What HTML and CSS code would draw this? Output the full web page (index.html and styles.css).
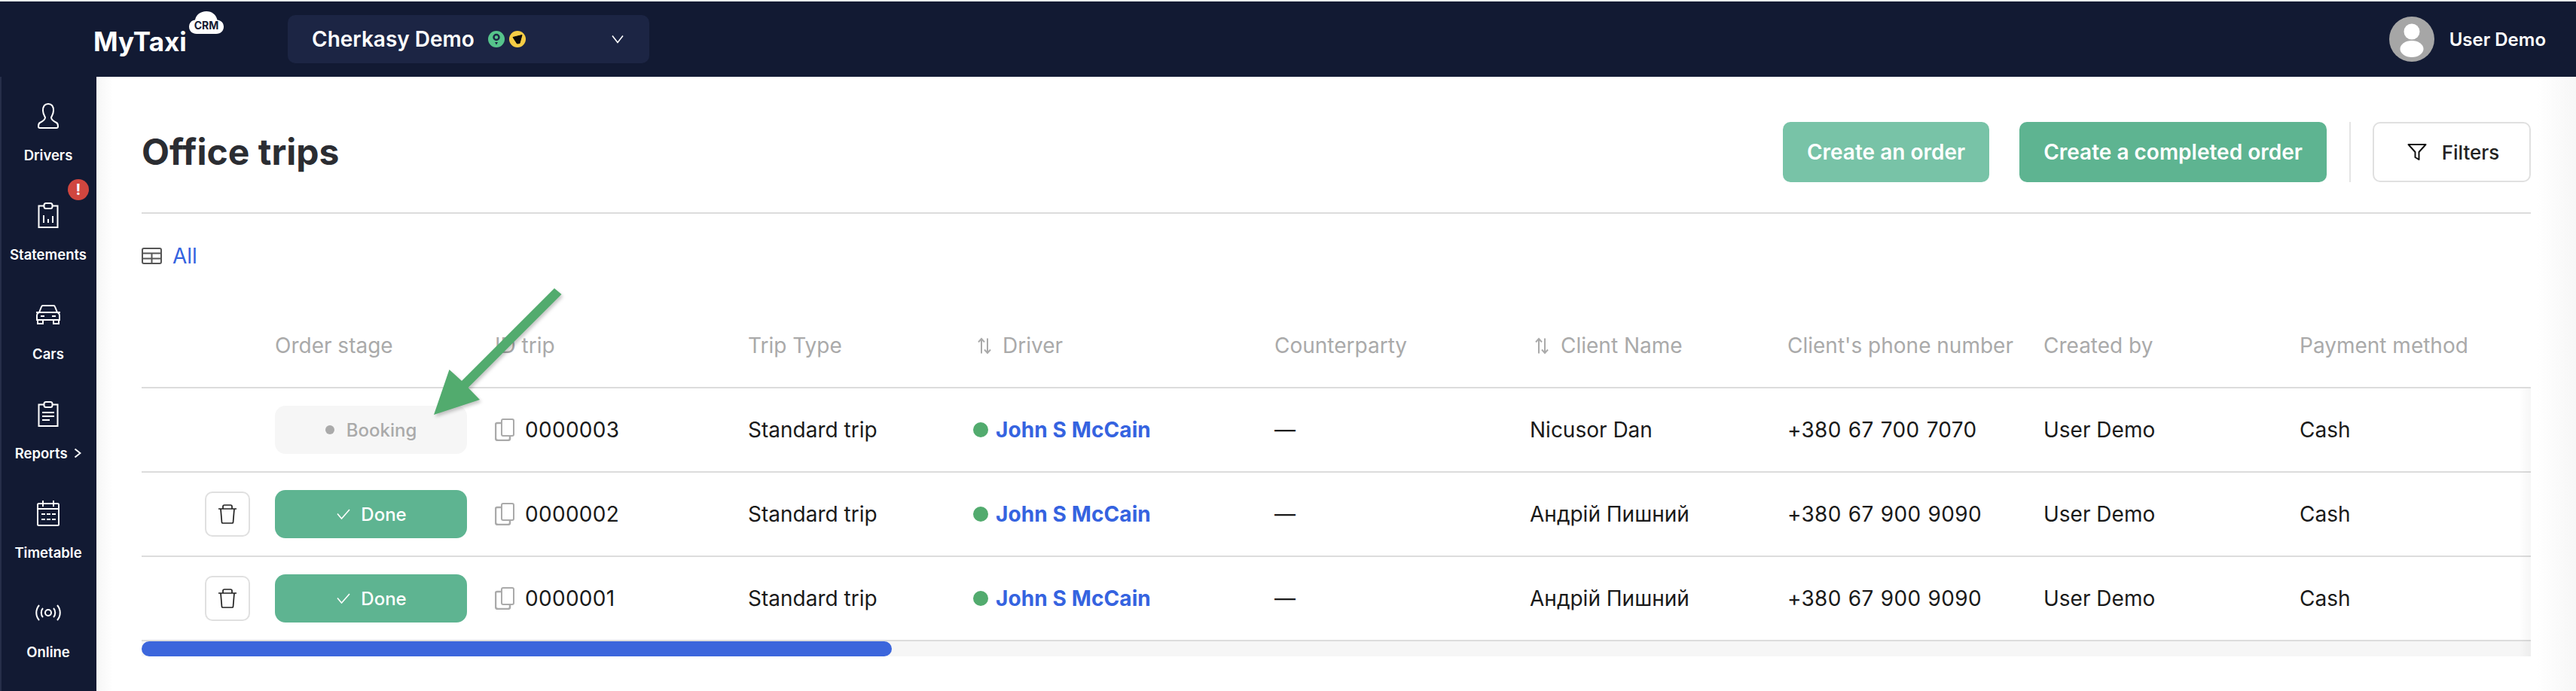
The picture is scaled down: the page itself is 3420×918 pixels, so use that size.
FILE: index.html
```html
<!DOCTYPE html>
<html lang="en">
<head>
<meta charset="utf-8">
<title>Office trips</title>
<link rel="stylesheet" href="styles.css">
</head>
<body>
<div class="app">
  <header class="topbar">
    <div class="logo">
      <span class="logo-text">MyTaxi</span>
      <svg class="logo-cloud" width="46" height="30" viewBox="0 0 46 30"><path fill="#fff" d="M10 30C4 30 0 26 0 20.500C0 15.500 3.500 12 8 11.500C9 5 15 0 23 0C30.500 0 36 4.500 37.500 11.500C42.500 12 46 15.500 46 20.500C46 26 42 30 36 30Z"/><text x="23" y="24" text-anchor="middle" class="logo-crm">CRM</text></svg>
    </div>
    <div class="city">
      <span class="city-name">Cherkasy Demo</span>
      <svg class="city-badge" width="22" height="22" viewBox="0 0 22 22"><circle cx="11" cy="11" r="11" fill="#56c48b"/><circle cx="11" cy="8.500" r="3.500" fill="none" stroke="#1c2544" stroke-width="2.500"/><path d="M9 15h4l-2 3.500z" fill="#1c2544"/></svg>
      <svg class="city-badge" width="22" height="22" viewBox="0 0 22 22"><circle cx="11" cy="11" r="11" fill="#f6cd45"/><path d="M5 8.500 17 5.500 14 16.500 10.500 17Z" fill="#0b0b0b" stroke="#0b0b0b" stroke-linejoin="round"/></svg>
      <svg class="city-chevron" width="18" height="12" viewBox="0 0 18 12"><path d="M2 1.500 9 10.500 16 1.500" fill="none" stroke="#fff" stroke-width="1.600"/></svg>
    </div>
    <div class="user">
      <svg width="60" height="60" viewBox="0 0 60 60"><circle cx="30" cy="30" r="30" fill="#a6a6a6"/><circle cx="30" cy="20" r="10.500" fill="#fff"/><ellipse cx="30" cy="43" rx="15.500" ry="11" fill="#fff"/></svg>
      <span class="user-name">User Demo</span>
    </div>
  </header>
  <div class="body">
    <nav class="sidebar">
      <a class="nav-item">
        <span class="nav-icon"><svg width="28" height="34" viewBox="0 0 28 34"><path class="ln" d="M14 1C9 1 7 5 7 10C7 14 9 17 10 19C10 22 7 24 3 26C1 27 1 29 1 31Q1 33 3 33H25Q27 33 27 31C27 29 27 27 25 26C21 24 18 22 18 19C19 17 21 14 21 10C21 5 19 1 14 1Z"/></svg></span>
        <span class="nav-label">Drivers</span>
      </a>
      <a class="nav-item">
        <span class="nav-badge">!</span>
        <span class="nav-icon"><svg width="28" height="34" viewBox="0 0 28 34"><path class="ln" d="M9 4.500H1.500V33H26.500V4.500H19"/><rect class="ln" x="8.500" y="1" width="11" height="7" rx="2.500"/><path class="ln" d="M8 17v10M14 22v5M20 18v9"/></svg></span>
        <span class="nav-label">Statements</span>
      </a>
      <a class="nav-item">
        <span class="nav-icon"><svg width="34" height="26" viewBox="0 0 34 26"><path class="ln" d="M5 10 8 2.500Q8.500 1 10 1H24Q25.500 1 26 2.500L29 10M5 10H1M29 10H33M3.500 11Q2 12 2 14V20H32V14Q32 12 30.500 11L29 10H5ZM3 20V25H10V20M24 20V25H31V20M7 15H12M22 15H27"/></svg></span>
        <span class="nav-label">Cars</span>
      </a>
      <a class="nav-item">
        <span class="nav-icon"><svg width="28" height="34" viewBox="0 0 28 34"><path class="ln" d="M9 4.500H1.500V33H26.500V4.500H19"/><rect class="ln" x="8.500" y="1" width="11" height="7" rx="2.500"/><path class="ln" d="M6 15H22M6 20H22M6 25H16"/></svg></span>
        <span class="nav-label">Reports <svg class="nav-arrow" width="10" height="14" viewBox="0 0 10 14"><path class="ln" d="M1.500 1.500 8.500 7 1.500 12.500"/></svg></span>
      </a>
      <a class="nav-item">
        <span class="nav-icon"><svg width="30" height="34" viewBox="0 0 30 34"><rect class="ln" x="1" y="4" width="28" height="29" rx="1.500"/><path class="ln" d="M8 0V8M22 0V8M1 11H29M6 18H11M13 18H18M20 18H25M6 25H11M13 25H18M20 25H25"/></svg></span>
        <span class="nav-label">Timetable</span>
      </a>
      <a class="nav-item">
        <span class="nav-icon"><svg width="34" height="22" viewBox="0 0 34 22"><circle class="ln" cx="17" cy="11" r="4"/><path class="ln" d="M5 1C0 7 0 15 5 21M29 1C34 7 34 15 29 21M10 5C7 8 7 14 10 17M24 5C27 8 27 14 24 17"/></svg></span>
        <span class="nav-label">Online</span>
      </a>
    </nav>
    <main class="content">
      <div class="page-head">
        <h1 class="title">Office trips</h1>
        <div class="actions">
          <button class="btn btn-light">Create an order</button>
          <button class="btn btn-green">Create a completed order</button>
          <span class="divider"></span>
          <button class="btn-filter"><svg width="26" height="24" viewBox="0 0 26 24"><path d="M1.500 2H24.500L15.500 12V22L10.500 19V12Z" fill="none" stroke="#111" stroke-width="2" stroke-linejoin="round"/></svg>Filters</button>
        </div>
      </div>
      <div class="tabs">
        <svg width="27" height="22" viewBox="0 0 27 22"><rect x="1" y="1" width="25" height="20" rx="2" fill="none" stroke="#555" stroke-width="2"/><path d="M1 7.500H26M1 14.500H26M13.500 7.500V21" fill="none" stroke="#555" stroke-width="2"/></svg>
        <span class="tab-all">All</span>
      </div>
      <div class="table">
        <div class="row head">
          <div></div>
          <div>Order stage</div>
          <div>ID trip</div>
          <div>Trip Type</div>
          <div class="sortable"><svg class="sort" width="18" height="23" viewBox="0 0 18 22"><path d="M5 21V2M1 6 5 1.500 9 6M13 1V20M9 16 13 20.500 17 16" fill="none" stroke="#aaa" stroke-width="2"/></svg>Driver</div>
          <div>Counterparty</div>
          <div class="sortable sort-client"><svg class="sort" width="18" height="23" viewBox="0 0 18 22"><path d="M5 21V2M1 6 5 1.500 9 6M13 1V20M9 16 13 20.500 17 16" fill="none" stroke="#aaa" stroke-width="2"/></svg>Client Name</div>
          <div>Client's phone number</div>
          <div>Created by</div>
          <div>Payment method</div>
        </div>
        <div class="row">
          <div></div>
          <div><span class="pill pill-booking"><i class="pill-dot"></i>Booking</span></div>
          <div class="id"><svg class="copy" width="26" height="30" viewBox="0 0 26 30"><rect x="9" y="1" width="16" height="22" rx="2" fill="none" stroke="#aaa" stroke-width="2"/><path d="M9 6H3Q1 6 1 8V26Q1 29 4 29H17Q20 29 20 27V23" fill="none" stroke="#aaa" stroke-width="2.500"/></svg>0000003</div>
          <div>Standard trip</div>
          <div class="driver"><i class="driver-dot"></i><a class="driver-link">John S McCain</a></div>
          <div>—</div>
          <div class="client">Nicusor Dan</div>
          <div class="phone">+380 67 700 7070</div>
          <div>User Demo</div>
          <div>Cash</div>
        </div>
        <div class="row">
          <div class="del-cell"><button class="del"><svg width="26" height="26" viewBox="0 0 26 26"><path d="M1 6H25M4 6 5.500 24Q5.500 25 7 25H19Q20.500 25 20.500 24L22 6M7 6V3Q7 1 9 1H17Q19 1 19 3V6" fill="none" stroke="#222" stroke-width="1.700"/></svg></button></div>
          <div><span class="pill pill-done"><svg class="check" width="18" height="14" viewBox="0 0 18 14"><path d="M1 6.500 6.500 13 17 1" fill="none" stroke="#fff" stroke-width="1.600"/></svg>Done</span></div>
          <div class="id"><svg class="copy" width="26" height="30" viewBox="0 0 26 30"><rect x="9" y="1" width="16" height="22" rx="2" fill="none" stroke="#aaa" stroke-width="2"/><path d="M9 6H3Q1 6 1 8V26Q1 29 4 29H17Q20 29 20 27V23" fill="none" stroke="#aaa" stroke-width="2.500"/></svg>0000002</div>
          <div>Standard trip</div>
          <div class="driver"><i class="driver-dot"></i><a class="driver-link">John S McCain</a></div>
          <div>—</div>
          <div class="client">Андрій Пишний</div>
          <div class="phone">+380 67 900 9090</div>
          <div>User Demo</div>
          <div>Cash</div>
        </div>
        <div class="row">
          <div class="del-cell"><button class="del"><svg width="26" height="26" viewBox="0 0 26 26"><path d="M1 6H25M4 6 5.500 24Q5.500 25 7 25H19Q20.500 25 20.500 24L22 6M7 6V3Q7 1 9 1H17Q19 1 19 3V6" fill="none" stroke="#222" stroke-width="1.700"/></svg></button></div>
          <div><span class="pill pill-done"><svg class="check" width="18" height="14" viewBox="0 0 18 14"><path d="M1 6.500 6.500 13 17 1" fill="none" stroke="#fff" stroke-width="1.600"/></svg>Done</span></div>
          <div class="id"><svg class="copy" width="26" height="30" viewBox="0 0 26 30"><rect x="9" y="1" width="16" height="22" rx="2" fill="none" stroke="#aaa" stroke-width="2"/><path d="M9 6H3Q1 6 1 8V26Q1 29 4 29H17Q20 29 20 27V23" fill="none" stroke="#aaa" stroke-width="2.500"/></svg>0000001</div>
          <div>Standard trip</div>
          <div class="driver"><i class="driver-dot"></i><a class="driver-link">John S McCain</a></div>
          <div>—</div>
          <div class="client">Андрій Пишний</div>
          <div class="phone">+380 67 900 9090</div>
          <div>User Demo</div>
          <div>Cash</div>
        </div>
        <div class="scroll"><div class="scroll-thumb"></div></div>
        <span class="table-edge"></span>
      </div>
    </main>
  </div>
  <svg class="annot-arrow" width="180" height="180" viewBox="0 0 180 180"><polygon fill="#52ab6e" points="166,3 175.500,11 51.500,135 67,151 6,171 26.500,111 43,126"/></svg>
</div>
</body>
</html>
```

FILE: styles.css
```css
* { box-sizing: border-box; }
html, body { margin: 0; padding: 0; height: 100%; overflow: hidden; background: #fff; }
body { font-family: Inter, "Liberation Sans", sans-serif; color: #1a1a1a; }
.app { position: relative; width: 3420px; height: 918px; display: flex; flex-direction: column; border-top: 2px solid #e6eaea; overflow: hidden; }
.topbar { height: 100px; flex: none; background: #121a33; display: flex; align-items: center; padding-left: 125px; color: #fff; }
.logo { position: relative; width: 257px; flex: none; height: 100px; }
.logo-text { position: absolute; left: -1px; top: 33px; font-size: 35px; line-height: 40px; font-weight: 700; }
.logo-cloud { position: absolute; left: 126px; top: 13px; }
.logo-crm { font-size: 14px; font-weight: 700; fill: #121a33; font-family: Inter, sans-serif; }
.city { width: 480px; height: 64px; background: #1c2544; border-radius: 10px; display: flex; align-items: center; padding-left: 32px; }
.city-name { font-size: 28px; font-weight: 600; margin-right: 18px; }
.city-badge { margin-right: 6px; }
.city-chevron { margin-left: auto; margin-right: 33px; }
.user { margin-left: auto; display: flex; align-items: center; gap: 20px; padding-right: 40px; }
.user-name { font-size: 24px; font-weight: 600; }
.body { flex: 1; display: flex; min-height: 0; }
.sidebar { width: 128px; flex: none; background: #121a33; border-left: 2px solid #262e49; padding-top: 12px; display: flex; flex-direction: column; color: #fff; }
.nav-item { position: relative; height: 132px; flex: none; display: flex; flex-direction: column; align-items: center; padding-top: 20px; margin-left: -2px; }
.nav-icon { height: 40px; display: flex; align-items: center; justify-content: center; }
.nav-label { margin-top: 20px; font-size: 18.500px; line-height: 24px; font-weight: 600; white-space: nowrap; }
.nav-arrow { margin-left: 4px; }
.nav-badge { position: absolute; left: 90px; top: -8px; width: 28px; height: 28px; border-radius: 50%; background: #d0463f; color: #fff; font-size: 20px; line-height: 28px; font-weight: 700; text-align: center; }
.ln { fill: none; stroke: #fff; stroke-width: 2; }
.content { flex: 1; min-width: 0; padding: 60px 60px 0 60px; background: linear-gradient(to right, #f6f6f6 0, #fff 22px, #fff 3240px, #f7f7f7 3290px); }
.page-head { height: 122px; display: flex; align-items: flex-start; justify-content: space-between; border-bottom: 2px solid #dcdcdc; }
.title { margin: 0; font-size: 48px; line-height: 80px; font-weight: 700; color: #2b2d32; }
.actions { display: flex; align-items: stretch; height: 80px; }
.btn { height: 80px; border: 0; border-radius: 10px; color: #fff; font: 600 28px Inter, sans-serif; padding: 0; }
.btn-light { width: 274px; background: #78c3a7; margin-right: 40px; }
.btn-green { width: 408px; background: #5eb491; }
.divider { width: 2px; background: #e4e4e4; margin: 0 29px 0 30px; }
.btn-filter { width: 210px; height: 80px; background: #fff; border: 2px solid #e0e0e0; border-radius: 10px; font: 500 26px Inter, sans-serif; color: #222; display: flex; align-items: center; justify-content: center; gap: 20px; padding: 0 0 0 4px; }
.tabs { display: flex; align-items: center; gap: 14px; height: 22px; margin-top: 45px; }
.tab-all { font-size: 28px; color: #3563e0; }
.table { position: relative; margin-top: 23px; width: 3172px; background: #fff; }
.row { display: grid; grid-template-columns: 177px 292px 336px 299px 400px 338px 343px 340px 340px 307px; align-items: center; height: 112px; border-bottom: 2px solid #dcdcdc; font-size: 28px; white-space: nowrap; }
.row.head { height: 142px; padding-top: 30px; color: #aaa; font-size: 28px; }
.sortable { display: flex; align-items: center; gap: 15px; padding-left: 6px; }
.sort-client { gap: 16px; padding-left: 8px; }
.sort { flex: none; }
.pill { width: 255px; height: 64px; border-radius: 14px; display: flex; align-items: center; justify-content: center; font-size: 24px; font-weight: 500; }
.pill-booking { background: #f6f6f6; color: #aaa; }
.pill-done { background: #5eb491; color: #fff; padding-left: 2px; }
.pill-dot { width: 12px; height: 12px; border-radius: 50%; background: #aaa; margin-right: 16px; }
.check { margin-right: 14px; }
.id { display: flex; align-items: center; gap: 14px; letter-spacing: 0.3px; }
.copy { flex: none; }
.client { padding-left: 1px; }
.phone { letter-spacing: 0.3px; word-spacing: 1px; }
.driver { display: flex; align-items: center; gap: 10px; }
.driver-dot { width: 20px; height: 20px; border-radius: 50%; background: #52ab6e; }
.driver-link { color: #3563e0; font-weight: 700; letter-spacing: 0.1px; }
.del-cell { display: flex; justify-content: flex-start; padding-left: 84px; }
.del { width: 60px; height: 60px; background: #fff; border: 2px solid #e0e0e0; border-radius: 10px; display: flex; align-items: center; justify-content: center; padding: 0; }
.scroll { height: 20px; background: #f6f6f6; }
.scroll-thumb { width: 996px; height: 20px; background: #3c66dc; border-radius: 10px; }
.table-edge { position: absolute; right: 0; top: 142px; bottom: 0; width: 16px; background: linear-gradient(to right, rgba(0,0,0,0), rgba(0,0,0,0.035)); }
.annot-arrow { position: absolute; left: 570px; top: 378px; filter: drop-shadow(2px 3px 2px rgba(0,0,0,0.22)); }
```
